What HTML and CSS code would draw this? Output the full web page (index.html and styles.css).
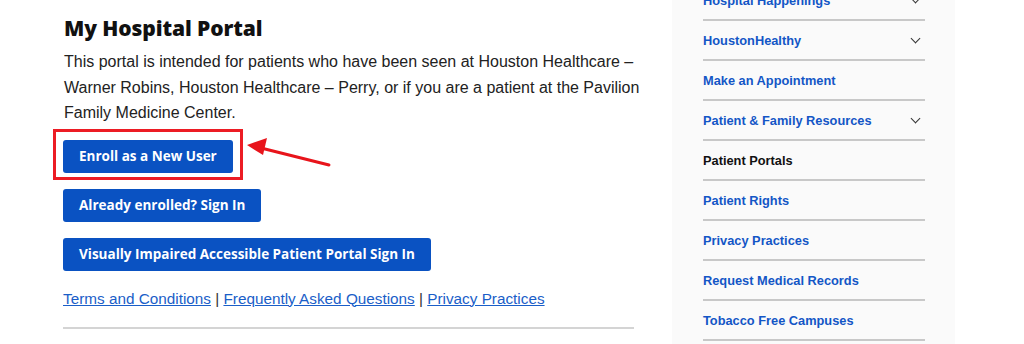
FILE: index.html
```html
<!DOCTYPE html>
<html>
<head>
<meta charset="utf-8">
<link rel="stylesheet" href="styles.css">
</head>
<body>
<div class="page">
  <main class="main">
    <h1 class="title">My Hospital Portal</h1>
    <p class="intro">This portal is intended for patients who have been seen at Houston Healthcare – Warner Robins, Houston Healthcare – Perry, or if you are a patient at the Pavilion Family Medicine Center.</p>
    <div class="buttons">
      <a class="btn" href="#">Enroll as a New User</a>
      <a class="btn" href="#">Already enrolled? Sign In</a>
      <a class="btn" href="#">Visually Impaired Accessible Patient Portal Sign In</a>
    </div>
    <p class="links"><a href="#">Terms and Conditions</a> | <a href="#">Frequently Asked Questions</a> | <a href="#">Privacy Practices</a></p>
    <hr class="rule">
    <div class="highlight"></div>
    <svg class="arrow" width="100" height="40" viewBox="0 0 100 40">
      <line x1="86" y1="31" x2="14" y2="13" stroke="#e8141b" stroke-width="3" stroke-linecap="round"/>
      <polygon points="4,11 24,4 20,21" fill="#e8141b"/>
    </svg>
  </main>
  <aside class="side">
    <ul class="nav">
      <li class="item"><a href="#">Hospital Happenings</a><span class="chev"></span></li>
      <li class="item"><a href="#">HoustonHealthy</a><span class="chev"></span></li>
      <li class="item"><a href="#">Make an Appointment</a></li>
      <li class="item"><a href="#">Patient &amp; Family Resources</a><span class="chev"></span></li>
      <li class="item current"><a href="#">Patient Portals</a></li>
      <li class="item"><a href="#">Patient Rights</a></li>
      <li class="item"><a href="#">Privacy Practices</a></li>
      <li class="item"><a href="#">Request Medical Records</a></li>
      <li class="item"><a href="#">Tobacco Free Campuses</a></li>
    </ul>
  </aside>
</div>
</body>
</html>
```
FILE: styles.css
```css
html, body {
  margin: 0;
  padding: 0;
  background: #fff;
}
body {
  width: 1024px;
  height: 344px;
  overflow: hidden;
  font-family: "Liberation Sans", Arial, sans-serif;
  color: #222;
}
.page {
  display: flex;
  align-items: flex-start;
}
.main {
  position: relative;
  width: 571px;
  margin-left: 63px;
  padding-top: 14px;
}
.title {
  margin: 0 0 7px 1px;
  font-family: "Open Sans", sans-serif;
  font-weight: 800;
  font-size: 21px;
  line-height: 28px;
  color: #111;
  letter-spacing: -0.1px;
}
.intro {
  margin: 0 -10px 0 1px;
  font-size: 16px;
  line-height: 25.5px;
  color: #222;
}
.buttons {
  display: flex;
  flex-direction: column;
  align-items: flex-start;
  gap: 16px;
  margin-top: 14px;
}
.btn {
  display: block;
  background: #0a52c2;
  color: #fff;
  text-decoration: none;
  font-family: "Open Sans", sans-serif;
  font-weight: 700;
  font-size: 13.5px;
  line-height: 33px;
  height: 33px;
  padding: 0 16px;
  border-radius: 3px;
}
.links {
  margin: 18px 0 0 0;
  font-size: 15.3px;
  line-height: 20px;
  color: #333;
}
.links a {
  color: #1a5ec8;
  text-decoration: underline;
}
.rule {
  margin: 18px 0 0 0;
  border: 0;
  height: 2px;
  background: #d4d4d4;
}
.highlight {
  position: absolute;
  left: -10px;
  top: 129px;
  width: 184px;
  height: 45px;
  border: 3px solid #ec1c24;
}
.arrow {
  position: absolute;
  left: 180px;
  top: 134px;
}
.side {
  margin-left: 38px;
  width: 283px;
  height: 344px;
  background: #fafafa;
  box-sizing: border-box;
  padding-left: 31px;
}
.nav {
  list-style: none;
  margin: -19px 0 0 0;
  padding: 0;
  width: 222px;
}
.item {
  display: flex;
  align-items: center;
  justify-content: space-between;
  height: 38px;
  border-bottom: 2px solid #c8c8c8;
}
.item a {
  font-family: "Liberation Sans", Arial, sans-serif;
  font-weight: 700;
  font-size: 12.8px;
  color: #1356c6;
  text-decoration: none;
}
.item.current a {
  color: #111;
}
.chev {
  width: 6px;
  height: 6px;
  border-right: 1.5px solid #333;
  border-bottom: 1.5px solid #333;
  transform: rotate(45deg);
  margin-right: 6px;
  margin-top: -4px;
}
```
